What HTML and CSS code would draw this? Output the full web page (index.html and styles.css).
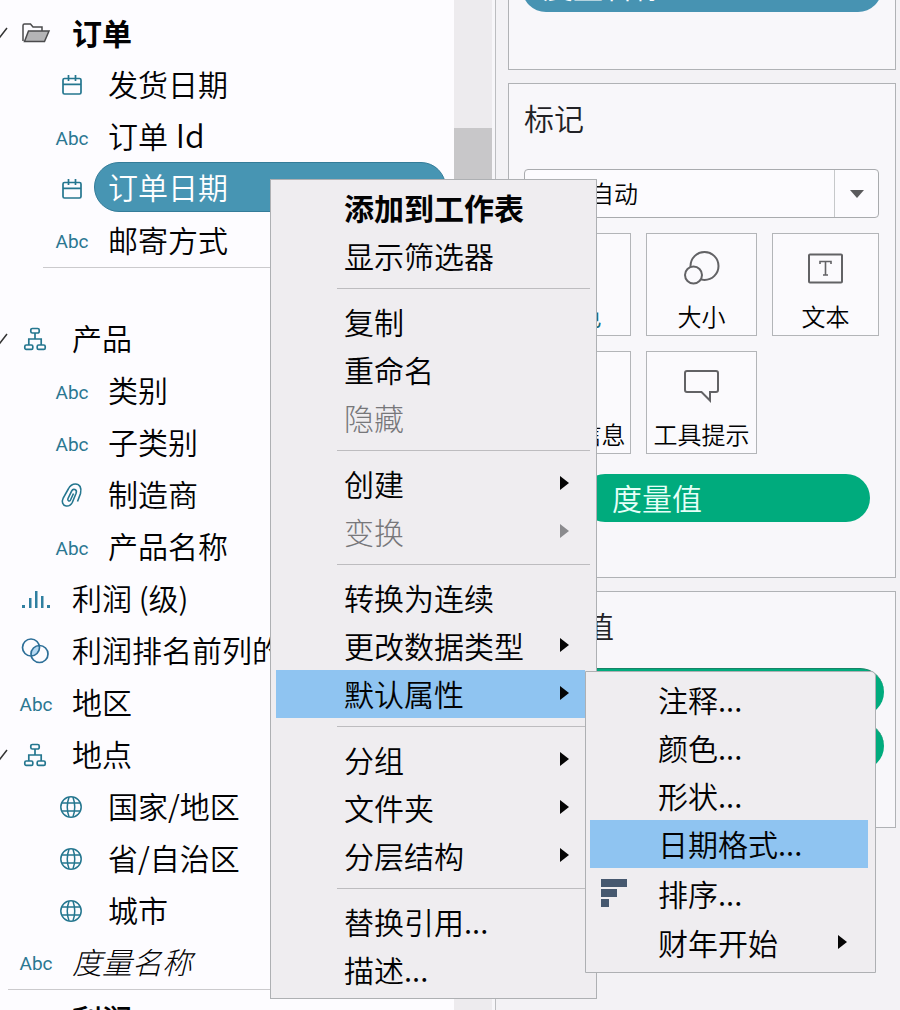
FILE: index.html
```html
<!DOCTYPE html>
<html lang="zh-CN">
<head>
<meta charset="utf-8">
<title>订单日期</title>
<link rel="stylesheet" href="styles.css">
</head>
<body>
<svg class="defs" width="0" height="0">
  <symbol id="cal" viewBox="0 0 22 22"><path d="M3.500 4.500h15q1.500 0 1.500 1.500v12.500q0 1.500-1.500 1.500h-15q-1.500 0-1.500-1.500V6q0-1.500 1.500-1.500zM2 10.300h18M7.500 1v6M14.500 1v6"/></symbol>
  <symbol id="tree" viewBox="0 0 24 24"><rect x="7.800" y="1.500" width="8.400" height="4.500" rx="1.600"/><rect x="1.800" y="18" width="8" height="4.300" rx="1.400"/><rect x="14.200" y="18" width="8" height="4.300" rx="1.400"/><path d="M12 6v6M5.800 18v-6h12.400v6"/></symbol>
  <symbol id="globe" viewBox="0 0 24 24"><circle cx="12" cy="12" r="10.200"/><path d="M3 8h18M3 16h18M10 2.200q-3.500 9.800 0 19.600M14 2.200q3.500 9.800 0 19.600"/></symbol>
  <symbol id="clip" viewBox="0 0 24 26"><path d="M18.500 19.500l3-8C23 5.500 20.500 2 16.500 2c-3.200 0-5.500 1.700-7.200 5L4.200 16c-1.800 3.700-.6 7.600 3 8 2.600.3 4.800-1 6.100-3.500l3.800-9.300c1.400-3.700-3-5.200-4.500-2L9 16.500c-1 2.400 1.500 3.400 2.500 1.500l3-6.500"/></symbol>
  <symbol id="arrow" viewBox="0 0 9 14"><path d="M0 0L9 7L0 14z"/></symbol>
</svg>
<div class="app">
  <div class="sidebar">
    <div class="row group bold"><svg class="chev" viewBox="0 0 12 12"><path d="M1 6l3 4L11 1"/></svg><span class="ico"><svg class="folder" viewBox="0 0 30 22"><path d="M2 19V3.500Q2 2 3.500 2h6l2.500 3h9v4" fill="none"/><path d="M7.500 9H28l-4.500 10.500H3.500z" class="flap"/></svg></span><span class="name">订单</span></div>
    <div class="row field"><span class="ico"><svg class="cal"><use href="#cal"/></svg></span><span class="name">发货日期</span></div>
    <div class="row field"><span class="ico">Abc</span><span class="name">订单 <span class="latin">Id</span></span></div>
    <div class="row field"><span class="ico"><svg class="cal"><use href="#cal"/></svg></span><span class="name selected">订单日期</span></div>
    <div class="row field last"><span class="ico">Abc</span><span class="name">邮寄方式</span></div>
    <div class="rule inset"></div>
    <div class="row group"><svg class="chev" viewBox="0 0 12 12"><path d="M1 6l3 4L11 1"/></svg><span class="ico"><svg class="tree"><use href="#tree"/></svg></span><span class="name">产品</span></div>
    <div class="row field"><span class="ico">Abc</span><span class="name">类别</span></div>
    <div class="row field"><span class="ico">Abc</span><span class="name">子类别</span></div>
    <div class="row field"><span class="ico"><svg class="clip"><use href="#clip"/></svg></span><span class="name">制造商</span></div>
    <div class="row field"><span class="ico">Abc</span><span class="name">产品名称</span></div>
    <div class="row"><span class="ico"><svg class="bars" viewBox="0 0 28 20"><path d="M0 15h3v3H0zM7 8h2.500v10H7zM13 1h2.500v17H13zM19 6h2.500v12H19zM25 15h3v3h-3z"/></svg></span><span class="name">利润 (级)</span></div>
    <div class="row"><span class="ico"><svg class="venn" viewBox="0 0 28 26"><path class="lens" d="M17.800 7.800A8.500 8.500 0 0 1 10.600 18.200A8.500 8.500 0 0 1 17.800 7.800z"/><circle cx="10" cy="9.500" r="8.500"/><circle cx="18.500" cy="16" r="8.500"/></svg></span><span class="name">利润排名前列的客户</span></div>
    <div class="row"><span class="ico">Abc</span><span class="name">地区</span></div>
    <div class="row group"><svg class="chev" viewBox="0 0 12 12"><path d="M1 6l3 4L11 1"/></svg><span class="ico"><svg class="tree"><use href="#tree"/></svg></span><span class="name">地点</span></div>
    <div class="row field"><span class="ico"><svg class="globe"><use href="#globe"/></svg></span><span class="name">国家/地区</span></div>
    <div class="row field"><span class="ico"><svg class="globe"><use href="#globe"/></svg></span><span class="name">省/自治区</span></div>
    <div class="row field"><span class="ico"><svg class="globe"><use href="#globe"/></svg></span><span class="name">城市</span></div>
    <div class="row italic"><span class="ico">Abc</span><span class="name">度量名称</span></div>
    <div class="rule"></div>
    <div class="row tail"><span class="ico">#</span><span class="name">利润</span></div>
  </div>
  <div class="scroll"><div class="thumb"></div></div>
  <div class="shelf">
    <div class="card filters"><div class="pill blue">度量名称</div></div>
    <div class="card marks">
      <div class="title">标记</div>
      <div class="select"><span class="value">自动</span><span class="drop"><svg viewBox="0 0 14 8"><path d="M0 0h14L7 8z"/></svg></span></div>
      <div class="grid">
        <div class="btn teal"><span>颜色</span></div>
        <div class="btn"><svg viewBox="0 0 38 36"><circle cx="21.500" cy="16" r="14"/><circle class="small" cx="10.500" cy="25" r="8.500"/></svg><span>大小</span></div>
        <div class="btn"><svg viewBox="0 0 38 36"><rect x="2" y="4.500" width="33" height="28" rx="1"/><path class="tee" d="M13 14v-2.500h11V14M18.500 11.500v13.500M16 25h5"/></svg><span>文本</span></div>
        <div class="btn"><span>详细信息</span></div>
        <div class="btn"><svg viewBox="0 0 38 36"><path d="M4 3h29q2 0 2 2v17q0 2-2 2h-6v8.500L18.500 24H4q-2 0-2-2V5q0-2 2-2z"/></svg><span>工具提示</span></div>
      </div>
      <div class="pill green">度量值</div>
    </div>
    <div class="card values">
      <div class="title">度量值</div>
      <div class="pill green wide"></div>
      <div class="pill green wide"></div>
    </div>
  </div>
</div>

<div class="menu main">
  <div class="item strong">添加到工作表</div>
  <div class="item">显示筛选器</div>
  <div class="sep"></div>
  <div class="item">复制</div>
  <div class="item">重命名</div>
  <div class="item off">隐藏</div>
  <div class="sep"></div>
  <div class="item">创建<svg class="arrow"><use href="#arrow"/></svg></div>
  <div class="item off">变换<svg class="arrow"><use href="#arrow"/></svg></div>
  <div class="sep"></div>
  <div class="item">转换为连续</div>
  <div class="item">更改数据类型<svg class="arrow"><use href="#arrow"/></svg></div>
  <div class="item active">默认属性<svg class="arrow"><use href="#arrow"/></svg></div>
  <div class="sep"></div>
  <div class="item">分组<svg class="arrow"><use href="#arrow"/></svg></div>
  <div class="item">文件夹<svg class="arrow"><use href="#arrow"/></svg></div>
  <div class="item">分层结构<svg class="arrow"><use href="#arrow"/></svg></div>
  <div class="sep"></div>
  <div class="item">替换引用...</div>
  <div class="item">描述...</div>
</div>
<div class="menu sub">
  <div class="item">注释...</div>
  <div class="item">颜色...</div>
  <div class="item">形状...</div>
  <div class="item active">日期格式...</div>
  <div class="item sort"><svg class="sorticon" viewBox="0 0 26 28"><path d="M0 0h26v8H0zM0 10h16v8H0zM0 20h8v8H0z"/></svg>排序...</div>
  <div class="item">财年开始<svg class="arrow"><use href="#arrow"/></svg></div>
</div>
</body>
</html>
```

FILE: styles.css
```css
* { box-sizing: border-box; }
body {
  margin: 0;
  width: 900px;
  height: 1010px;
  overflow: hidden;
  position: relative;
  font: 350 30px/48px "Noto Sans CJK SC", sans-serif;
  color: #020203;
  background: #f3f2f5;
}
svg { display: block; flex: none; }
.defs { position: absolute; }
.app { display: flex; height: 1010px; overflow: hidden; }

/* data pane */
.sidebar { width: 454px; padding-top: 8px; background: #fdfcff; overflow: hidden; flex: none; }
.row { display: flex; align-items: center; height: 52px; position: relative; white-space: nowrap; }
.row .ico {
  width: 72px;
  flex: none;
  display: flex;
  justify-content: center;
  font: 400 19px "Roboto", sans-serif;
  color: #2b7791;
}
.row .ico svg { fill: none; stroke: #24768f; stroke-width: 1.7; margin-top: -2px; }
.row .name { padding-bottom: 6px; }
.row.field { padding-left: 36px; }
.row.field.last { height: 51px; }
.row.bold .name { font-weight: 700; padding-bottom: 5px; }
.row.italic .name { font-style: italic; font-weight: 300; }
.latin { font-size: 32px; line-height: 1; margin-left: 1px; }
.chev { position: absolute; left: -4px; top: 19px; width: 12px; height: 12px; fill: none; stroke: #333; stroke-width: 1.5; }
.row .ico .folder { width: 30px; height: 22px; stroke: #4a4a4c; stroke-width: 1.500; }
.folder .flap { fill: #b4b4b6; }
.cal { width: 22px; height: 22px; }
.tree, .globe { width: 24px; height: 24px; margin-left: -2px; }
.row .ico .globe { stroke-width: 1.500; }
.row .ico .clip { width: 24px; height: 26px; margin-left: -2px; stroke-width: 1.600; }
.row .ico .bars { width: 28px; height: 20px; margin-left: -1px; margin-top: 0; fill: #2f7fa0; stroke: none; }
.row .ico .venn { width: 28px; height: 26px; margin-left: -2px; stroke: #2d6f98; }
.venn .lens { fill: #b5d8f2; stroke: none; }
.row .name.selected {
  width: 352px;
  height: 50px;
  margin-left: -14px;
  margin-top: -6px;
  padding: 0 0 0 13px;
  line-height: 47px;
  border: 1px solid #347c99;
  border-radius: 25px;
  background: #4795b3;
  color: #fff;
}
.rule { height: 1px; margin-left: 8px; background: #cbcacd; }
.rule.inset { margin: 0 0 46px 43px; }
.row.italic { height: 51px; }
.row.tail { height: 56px; margin-top: 3px; }
.row.tail .name { font-weight: 500; }

.scroll { width: 42px; flex: none; border-right: 1px solid #bcbdc0; background: linear-gradient(90deg, #edebee 38px, #f7f6f9 38px); padding-top: 128px; }
.thumb { width: 38px; height: 600px; background: #c8c7c9; }

/* shelves */
.shelf { flex: none; width: 400px; padding-left: 12px; display: flex; flex-direction: column; gap: 14px; }
.card { width: 388px; border: 1px solid #b0b2b5; background: #f8f7fa; padding: 0 15px; }
.card.filters { height: 70px; border-top: 0; }
.card.marks { height: 495px; margin-top: -1px; }
.card.values { height: 237px; margin-top: -1px; }
.title { height: 85px; padding-top: 9px; color: #222226; }
.pill { height: 48px; border-radius: 24px; color: #fff; line-height: 46px; }
.pill.blue { margin: -36px -2px 0 -2px; padding-left: 21px; line-height: 42px; background: #4793b2; }
.pill.green { background: #00ab7d; margin: 20px 10px 0 57px; padding-left: 31px; color: #e6fff8; }
.values .title { height: 76px; }
.pill.green.wide { margin: 0 -4px 6px 0; border-top: 1px solid #178466; }
.select { display: flex; width: 355px; height: 49px; border: 1px solid #a9abae; border-radius: 4px; background: #fcfbfe; }
.value { flex: 1; padding-left: 65px; font-size: 24px; line-height: 46px; }
.drop { width: 44px; border-left: 1px solid #c6c8ca; display: flex; align-items: center; justify-content: center; }
.drop svg { width: 14px; height: 8px; fill: #5a5a5c; }
.grid { display: grid; grid-template-columns: 107px 111px 107px; grid-auto-rows: 103px; gap: 15px; margin-top: 15px; }
.btn {
  border: 1px solid #b3b5b8;
  background: #fbfafd;
  display: flex;
  flex-direction: column;
  align-items: center;
  justify-content: flex-end;
  padding-bottom: 1px;
  font-size: 24px;
  line-height: 36px;
  white-space: nowrap;
}
.btn svg { width: 38px; height: 36px; margin-bottom: 12px; fill: none; stroke: #626265; stroke-width: 2; }
.btn svg .small { fill: #fbfafd; }
.btn svg .tee { stroke-width: 1.6; }
.teal { color: #186b78; }

/* context menus */
.menu { position: absolute; border: 1px solid #aeb0b3; background: #efedf0; }
.menu.main { left: 270px; top: 179px; width: 327px; height: 820px; padding: 4px 5px; }
.menu.sub { left: 585px; top: 671px; width: 291px; height: 302px; padding: 4px 7px 0 4px; border-radius: 0 5px 0 0; }
.item { display: flex; align-items: center; height: 48px; padding: 0 0 2px 68px; white-space: nowrap; }
.item .arrow { width: 9px; height: 14px; margin: 0 22px 0 auto; fill: #050505; }
.sub .item .arrow { margin-right: 21px; }
.item.strong { font-weight: 700; }
.item.off { color: #77777a; font-weight: 300; }
.item.off .arrow { fill: #8b8b8e; }
.item.active { background: #8fc4f1; }
.main .item.active { margin-right: 6px; }
.main .item.active .arrow { margin-right: 16px; }
.sep { height: 18px; padding-top: 8px; margin: 0 1px 0 61px; }
.sep::before { content: ""; display: block; height: 1px; background: #bdbcbf; }
.item.sort { height: 51px; padding-left: 11px; }
.sorticon { width: 26px; height: 28px; margin: 0 31px 0 0; fill: #46586f; }
```
